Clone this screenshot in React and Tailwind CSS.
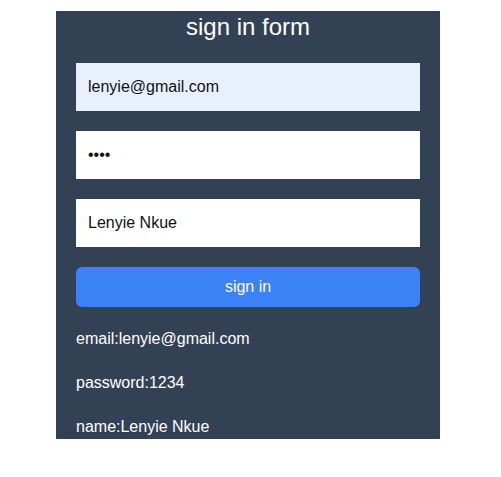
export default function App() {
  return (
    <div className="min-h-[477px] bg-white font-['Liberation_Sans',Arial,sans-serif]">
      <form
        onSubmit={e => e.preventDefault()}
        className="ml-14 mt-[11px] inline-flex w-96 flex-col gap-5 bg-[#334155] px-5 align-top"
      >
        <h1 className="text-center text-2xl leading-8 text-white">sign in form</h1>
        <input
          type="email"
          defaultValue="lenyie@gmail.com"
          className="h-12 bg-[#e8f0fe] px-3 text-base text-[#111] outline-none"
        />
        <input
          type="password"
          defaultValue="1234"
          className="h-12 bg-white px-3 text-base text-[#111] outline-none"
        />
        <input
          type="text"
          defaultValue="Lenyie Nkue"
          className="h-12 bg-white px-3 text-base text-[#111] outline-none"
        />
        <button className="h-10 rounded-md bg-[#3b82f6] text-base text-white">sign in</button>
        <p className="text-base leading-6 text-white">email:lenyie@gmail.com</p>
        <p className="text-base leading-6 text-white">password:1234</p>
        <p className="text-base leading-6 text-white">name:Lenyie Nkue</p>
      </form>
    </div>
  )
}
